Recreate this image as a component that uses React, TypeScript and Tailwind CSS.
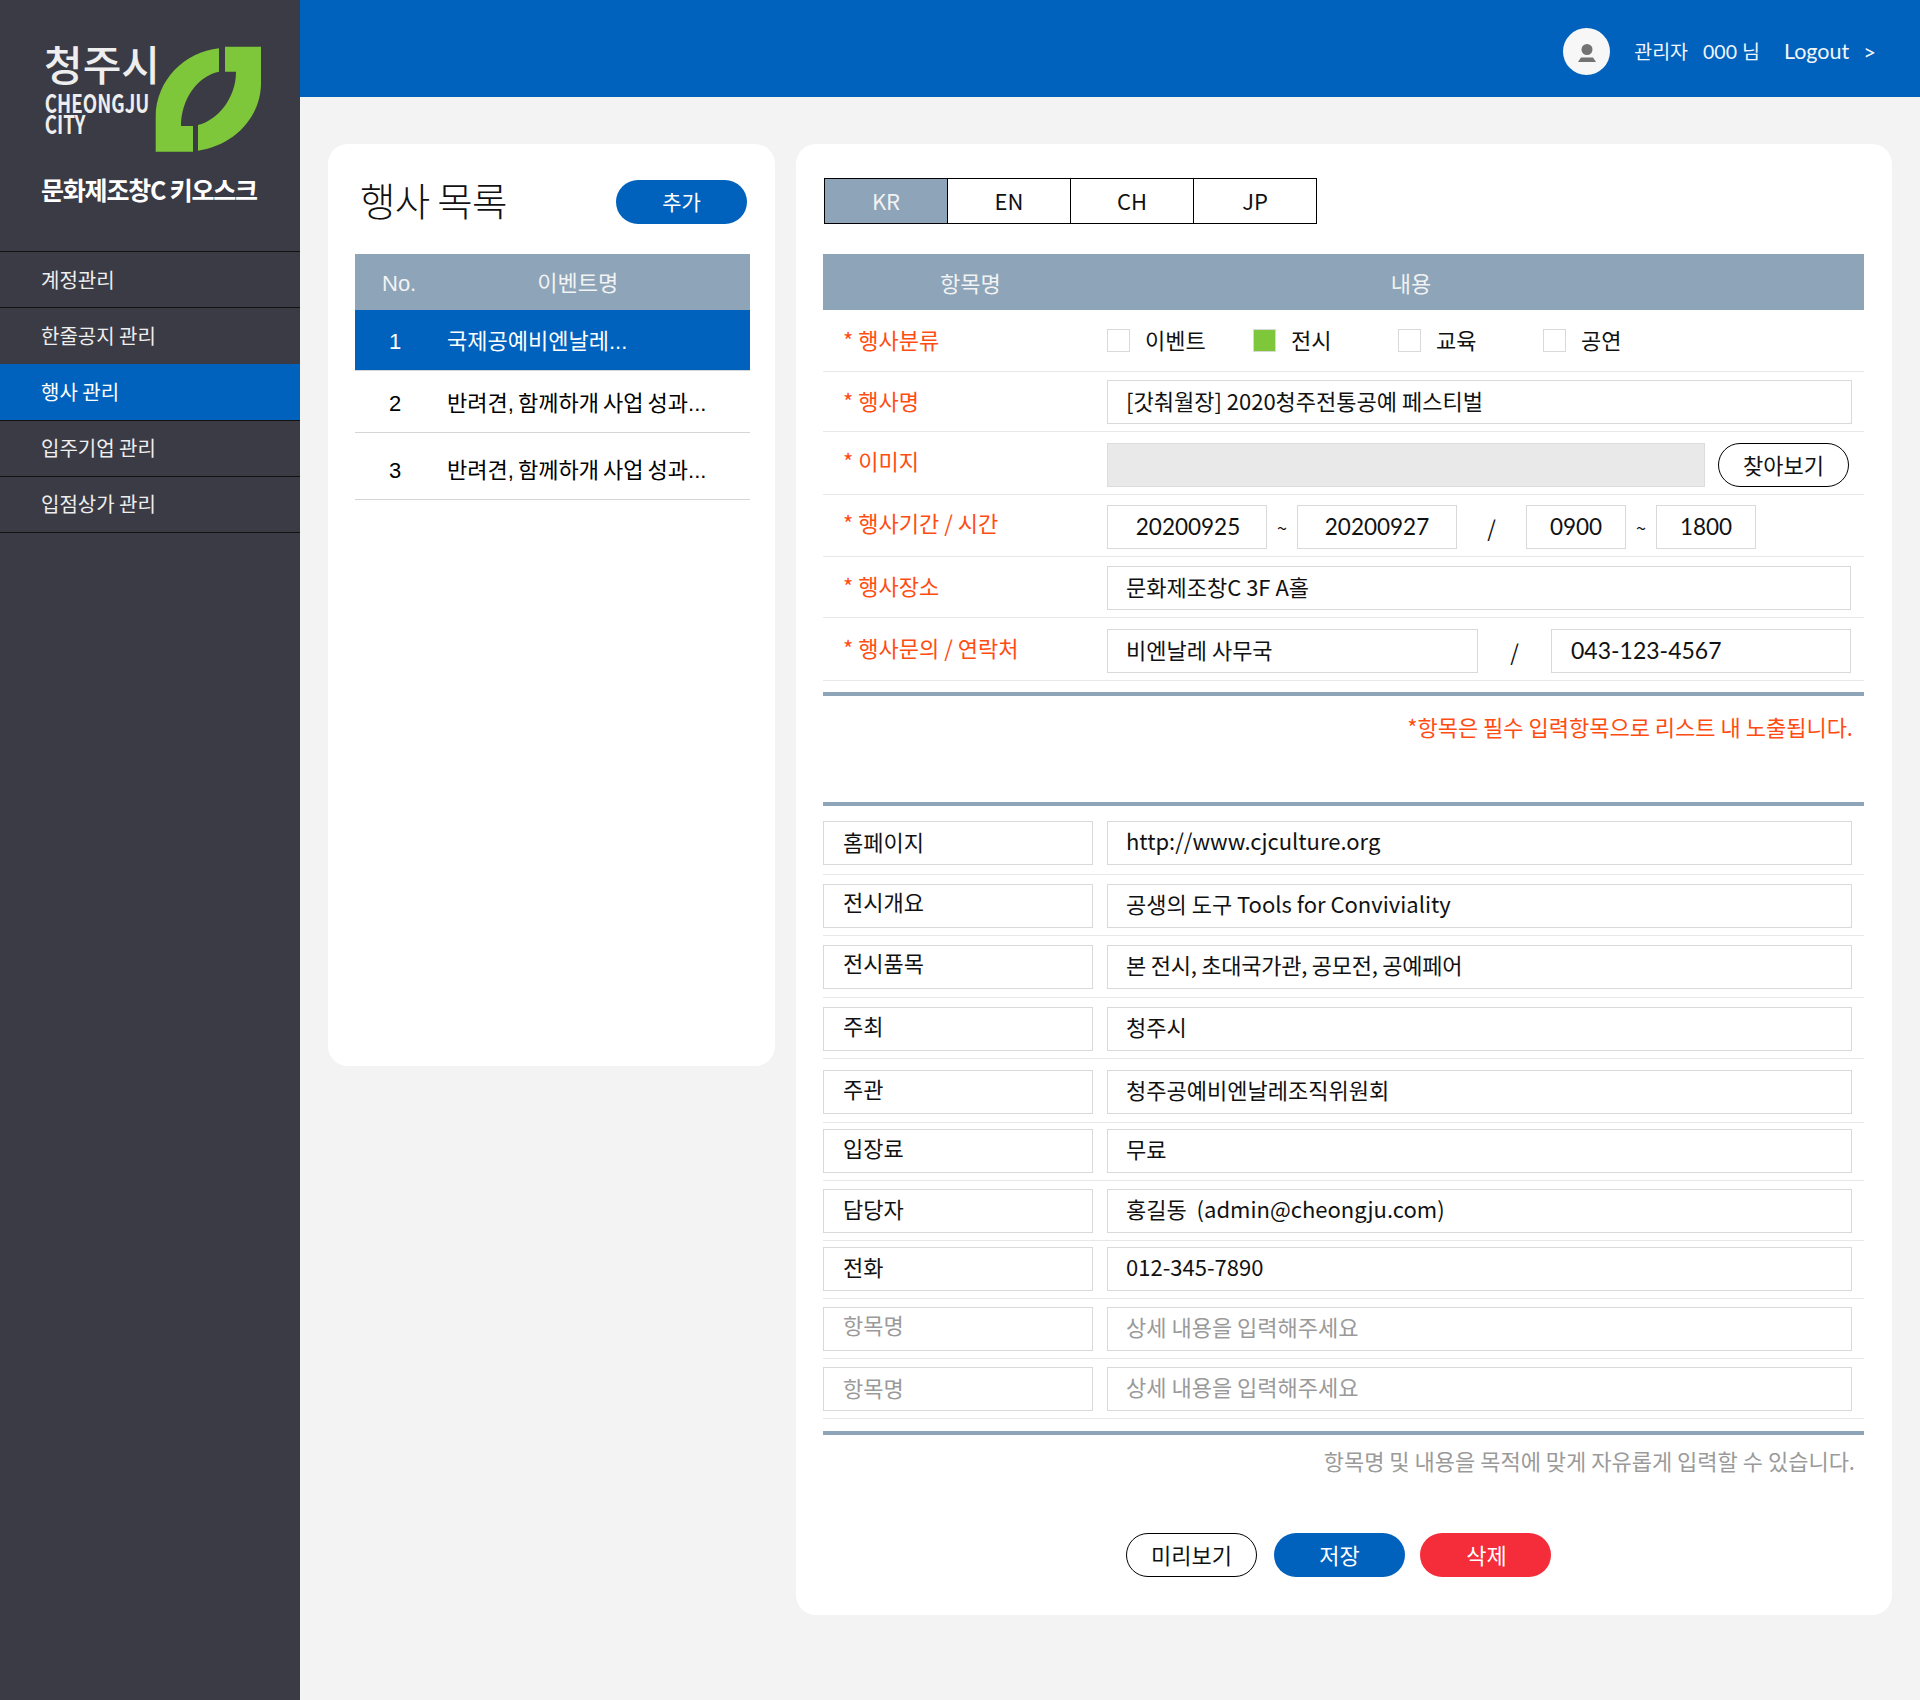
const kr = "font-['Noto_Sans_CJK_KR',sans-serif]";

const menus = [
  { name: "계정관리", cls: "h-[56px] border-b border-[#111]" },
  { name: "한줄공지 관리", cls: "h-[56px]" },
  { name: "행사 관리", cls: "h-[56px] bg-[#0062bd] text-white" },
  { name: "입주기업 관리", cls: "h-[57px] border-y border-[#111] pb-[2px]" },
  { name: "입점상가 관리", cls: "h-[56px] border-b border-[#111] pb-[2px]" },
];

const events = [
  { no: 1, title: "국제공예비엔날레...", cls: "h-[61px] pt-[2px] bg-[#0062bd] text-white border-b border-[#d5d5d5]" },
  { no: 2, title: "반려견, 함께하개 사업 성과...", cls: "h-[62px] pt-[3px] border-b border-[#d5d5d5]" },
  { no: 3, title: "반려견, 함께하개 사업 성과...", cls: "h-[67px] pt-[8px] border-b border-[#d5d5d5]" },
];

const details = [
  { label: "홈페이지", value: "http://www.cjculture.org", cls: "h-[69px] pt-[15px]", labelCls: "pb-[3px]" },
  { label: "전시개요", value: "공생의 도구 Tools for Conviviality", cls: "h-[61px] pt-[9px]", labelCls: "pb-[10px]" },
  { label: "전시품목", value: "본 전시, 초대국가관, 공모전, 공예페어", cls: "h-[62px] pt-[9px]", labelCls: "pb-[9px]", valueCls: "tracking-[-0.25px]" },
  { label: "주최", value: "청주시", cls: "h-[61px] pt-[9px]", labelCls: "pb-[7px]" },
  { label: "주관", value: "청주공예비엔날레조직위원회", cls: "h-[64px] pt-[11px]", labelCls: "pb-[7px]" },
  { label: "입장료", value: "무료", cls: "h-[58px] pt-[6px]", labelCls: "pb-[7px]" },
  { label: "담당자", value: "홍길동  (admin@cheongju.com)", cls: "h-[60px] pt-[8px]", labelCls: "pb-[6px]" },
  { label: "전화", value: "012-345-7890", cls: "h-[58px] pt-[6px]", labelCls: "pb-[6px]" },
  { label: "항목명", value: "상세 내용을 입력해주세요", cls: "h-[60px] pt-[8px]", labelCls: "pb-[9px] text-[#9a9a9a]", valueCls: "text-[#9a9a9a]" },
  { label: "항목명", value: "상세 내용을 입력해주세요", cls: "h-[60px] pt-[8px]", labelCls: "pb-[3px] text-[#9a9a9a]", valueCls: "text-[#9a9a9a]" },
];

const Field = ({ className = "", children }: { className?: string; children?: React.ReactNode }) => (
  <div className={`flex h-[44px] shrink-0 items-center border border-[#d9d9d9] whitespace-pre ${className}`}>
    {children}
  </div>
);

const ReqLabel = ({ children, className = "" }: { children: React.ReactNode; className?: string }) => (
  <div className={`flex w-[284px] shrink-0 items-center pl-[20px] text-[#ff4d12] ${className}`}>
    <span className="mr-[5px]">*</span>
    {children}
  </div>
);

const Check = ({ label, on, className }: { label: string; on?: boolean; className: string }) => (
  <div className={`flex items-center ${className}`}>
    <span className={`h-[23px] w-[23px] border border-[#d9d9d9] ${on ? "bg-[#7ec73a]" : "bg-white"}`} />
    <span className="ml-[15px] pb-[2px]">{label}</span>
  </div>
);

function Logo() {
  return (
    <div className="flex h-[251px] flex-col pl-[41px] pt-[41px] text-[#eeeeee]">
      <div className="flex h-[107px]">
        <div className="w-[114px] whitespace-nowrap">
          <div className="mt-[1px] pl-[3px] text-[42px] leading-[42px] font-medium">청주시</div>
          <div className="mt-[8px] origin-left scale-x-[0.75] pl-[5px] text-[25px] leading-[20px] font-bold">CHEONGJU</div>
          <div className="mt-[1px] origin-left scale-x-[0.75] pl-[5px] text-[25px] leading-[20px] font-bold">CITY</div>
        </div>
        <svg className="mt-[5px]" width="107" height="107" viewBox="155 46 107 107">
          <path
            fill="#7ec73a"
            d="M155.7 151.7V117C155.7 80 185 52 219 48.3V71.7C197 76 181 100 181 126H193V151.7Z"
          />
          <path
            fill="#7ec73a"
            d="M225 46.7H261V83C261 118 233 146 198 150.7V125C218 120 236 98 236 71.7H225Z"
          />
        </svg>
      </div>
      <div className="mt-[24px] whitespace-nowrap text-[25px] leading-[34px] font-bold tracking-[-1.2px] text-white">문화제조창C 키오스크</div>
    </div>
  );
}

function Sidebar() {
  return (
    <aside className="w-[300px] shrink-0 bg-[#3b3b45]">
      <Logo />
      <div className="border-t border-[#111] text-[20px] text-[#eeeeee]">
        {menus.map((m) => (
          <div key={m.name} className={`flex items-center pl-[41px] ${m.cls}`}>
            {m.name}
          </div>
        ))}
      </div>
    </aside>
  );
}

function Topbar() {
  return (
    <header className="flex h-[97px] items-center justify-end bg-[#0062bd] pt-[6px] pr-[44px] text-[19.5px] text-[#f2f6fb] font-['Lato','Noto_Sans_CJK_KR',sans-serif]">
      <div className="flex h-[47px] w-[47px] items-center justify-center rounded-full bg-[#f7f7f7]">
        <svg width="47" height="47" viewBox="0 0 47 47">
          <circle cx="24" cy="21.5" r="5.5" fill="#737373" />
          <path d="M15 34L18 29.5H30L33 34Z" fill="#737373" />
        </svg>
      </div>
      <span className="ml-[24px]">관리자</span>
      <span className="ml-[15px]">000 님</span>
      <span className="ml-[24px] text-[21.5px]">Logout</span>
      <span className="ml-[14px] text-[22px]">&gt;</span>
    </header>
  );
}

function EventList() {
  return (
    <section className="h-[922px] w-[447px] shrink-0 rounded-[20px] bg-white pl-[27px] pr-[25px] font-['Liberation_Sans','Noto_Sans_CJK_KR',sans-serif]">
      <div className="flex h-[110px] items-start">
        <h1 className="mt-[25px] ml-[5px] text-[38.5px] leading-[60px] font-extralight tracking-[-0.7px] text-[#111] font-['Noto_Sans_CJK_KR',sans-serif]">
          행사 목록
        </h1>
        <button className="mt-[36px] ml-auto flex h-[44px] w-[131px] items-center justify-center rounded-full bg-[#0062bd] text-[21px] text-white mr-[3px] font-['Noto_Sans_CJK_KR',sans-serif]">
          추가
        </button>
      </div>
      <div className="flex h-[56px] items-center bg-[#8da4b9] pt-[3px] text-[22px] text-[#f2f2f2]">
        <span className="ml-[27px]">No.</span>
        <span className="ml-[121px]">이벤트명</span>
      </div>
      {events.map((e) => (
        <div key={e.no} className={`flex items-center text-[22px] ${e.cls}`}>
          <span className="w-[92px] pl-[34px]">{e.no}</span>
          <span className="[word-spacing:-2px]">{e.title}</span>
        </div>
      ))}
    </section>
  );
}

function Editor() {
  return (
    <section className={`h-[1471px] w-[1096px] shrink-0 rounded-[20px] bg-white pt-[34px] pl-[27px] text-[22px] text-[#111] ${kr}`}>
      <div className="ml-[1px] flex h-[46px] w-[493px] border border-black">
        <div className="flex flex-1 items-center justify-center border-r border-black bg-[#8da4b9] pb-[2px] text-[#f2f2f2]">KR</div>
        <div className="flex flex-1 items-center justify-center border-r border-black pb-[2px]">EN</div>
        <div className="flex flex-1 items-center justify-center border-r border-black pb-[2px]">CH</div>
        <div className="flex flex-1 items-center justify-center pb-[2px]">JP</div>
      </div>

      <div className="mt-[30px] w-[1041px]">
        <div className="flex h-[56px] items-center bg-[#8da4b9] text-[#f2f2f2]">
          <span className="ml-[117px]">항목명</span>
          <span className="ml-[390px]">내용</span>
        </div>

        <div className="flex h-[62px] border-b border-[#e8e8e8] pt-[19px]">
          <ReqLabel className="h-[21px]">행사분류</ReqLabel>
          <div className="flex h-[23px] items-center">
            <Check label="이벤트" className="w-[146px]" />
            <Check label="전시" on className="w-[145px]" />
            <Check label="교육" className="w-[145px]" />
            <Check label="공연" className="w-[145px]" />
          </div>
        </div>

        <div className="flex h-[60px] border-b border-[#e8e8e8] pt-[8px]">
          <ReqLabel className="h-[40px]">행사명</ReqLabel>
          <Field className="w-[745px] pb-[3px] pl-[18px]">[갓춰월장] 2020청주전통공예 페스티벌</Field>
        </div>

        <div className="flex h-[63px] border-b border-[#e8e8e8] pt-[11px]">
          <ReqLabel className="h-[35px]">이미지</ReqLabel>
          <div className="h-[44px] w-[598px] shrink-0 border border-[#dcdcdc] bg-[#e9e9e9]" />
          <button className="ml-[13px] flex h-[44px] w-[131px] items-center justify-center rounded-full border border-black pb-[2px]">
            찾아보기
          </button>
        </div>

        <div className="flex h-[62px] border-b border-[#e8e8e8] pt-[10px]">
          <ReqLabel className="h-[35px]">행사기간 / 시간</ReqLabel>
          <Field className="w-[160px] justify-center pl-[2px] text-[22.5px] font-['Lato','Noto_Sans_CJK_KR',sans-serif]">20200925</Field>
          <span className="flex h-[44px] w-[30px] items-center justify-center text-[18px]">~</span>
          <Field className="w-[160px] justify-center text-[22.5px] font-['Lato','Noto_Sans_CJK_KR',sans-serif]">20200927</Field>
          <span className="flex h-[44px] w-[69px] items-center justify-center">/</span>
          <Field className="w-[100px] justify-center text-[22.5px] font-['Lato','Noto_Sans_CJK_KR',sans-serif]">0900</Field>
          <span className="flex h-[44px] w-[30px] items-center justify-center text-[18px]">~</span>
          <Field className="w-[100px] justify-center text-[22.5px] font-['Lato','Noto_Sans_CJK_KR',sans-serif]">1800</Field>
        </div>

        <div className="flex h-[61px] border-b border-[#e8e8e8] pt-[9px]">
          <ReqLabel className="h-[38px]">행사장소</ReqLabel>
          <Field className="w-[744px] pb-[3px] pl-[18px]">문화제조창C 3F A홀</Field>
        </div>

        <div className="flex h-[63px] border-b border-[#e8e8e8] pt-[11px]">
          <ReqLabel className="h-[37px]">행사문의 / 연락처</ReqLabel>
          <Field className="w-[371px] pb-[3px] pl-[18px]">비엔날레 사무국</Field>
          <span className="flex h-[44px] w-[73px] items-center justify-center">/</span>
          <Field className="w-[300px] pb-[2px] pl-[19px] text-[23px] font-['Lato','Noto_Sans_CJK_KR',sans-serif]">043-123-4567</Field>
        </div>

        <div className="mt-[11px] h-[4px] bg-[#8da4b9]" />
        <p className="mt-[14px] h-[33px] pr-[11px] text-right leading-[33px] text-[#ff4d12]">
          *항목은 필수 입력항목으로 리스트 내 노출됩니다.
        </p>
        <div className="mt-[59px] h-[4px] bg-[#8da4b9]" />

        {details.map((d, i) => (
          <div key={i} className={`flex border-b border-[#e8e8e8] ${d.cls}`}>
            <Field className={`w-[270px] pl-[19px] ${d.labelCls}`}>{d.label}</Field>
            <Field className={`ml-[14px] w-[745px] pb-[5px] pl-[18px] ${d.valueCls ?? ""}`}>{d.value}</Field>
          </div>
        ))}

        <div className="mt-[12px] h-[4px] bg-[#8da4b9]" />
        <p className="mt-[9px] h-[32px] pr-[9px] text-right leading-[32px] text-[#9a9a9a]">
          항목명 및 내용을 목적에 맞게 자유롭게 입력할 수 있습니다.
        </p>

        <div className="mt-[57px] flex pl-[303px]">
          <button className="flex h-[44px] w-[131px] items-center justify-center rounded-full border border-black pb-[2px]">미리보기</button>
          <button className="ml-[17px] flex h-[44px] w-[131px] items-center justify-center rounded-full bg-[#0062bd] pb-[2px] text-white">저장</button>
          <button className="ml-[15px] flex h-[44px] w-[131px] items-center justify-center rounded-full bg-[#f52c3a] pb-[2px] pl-[2px] text-white">삭제</button>
        </div>
      </div>
    </section>
  );
}

export default function App() {
  return (
    <div className={`flex h-[1700px] w-[1920px] bg-[#f3f3f3] ${kr}`}>
      <Sidebar />
      <div className="flex-1">
        <Topbar />
        <main className="flex items-start gap-[21px] pl-[28px] pt-[47px]">
          <EventList />
          <Editor />
        </main>
      </div>
    </div>
  );
}
